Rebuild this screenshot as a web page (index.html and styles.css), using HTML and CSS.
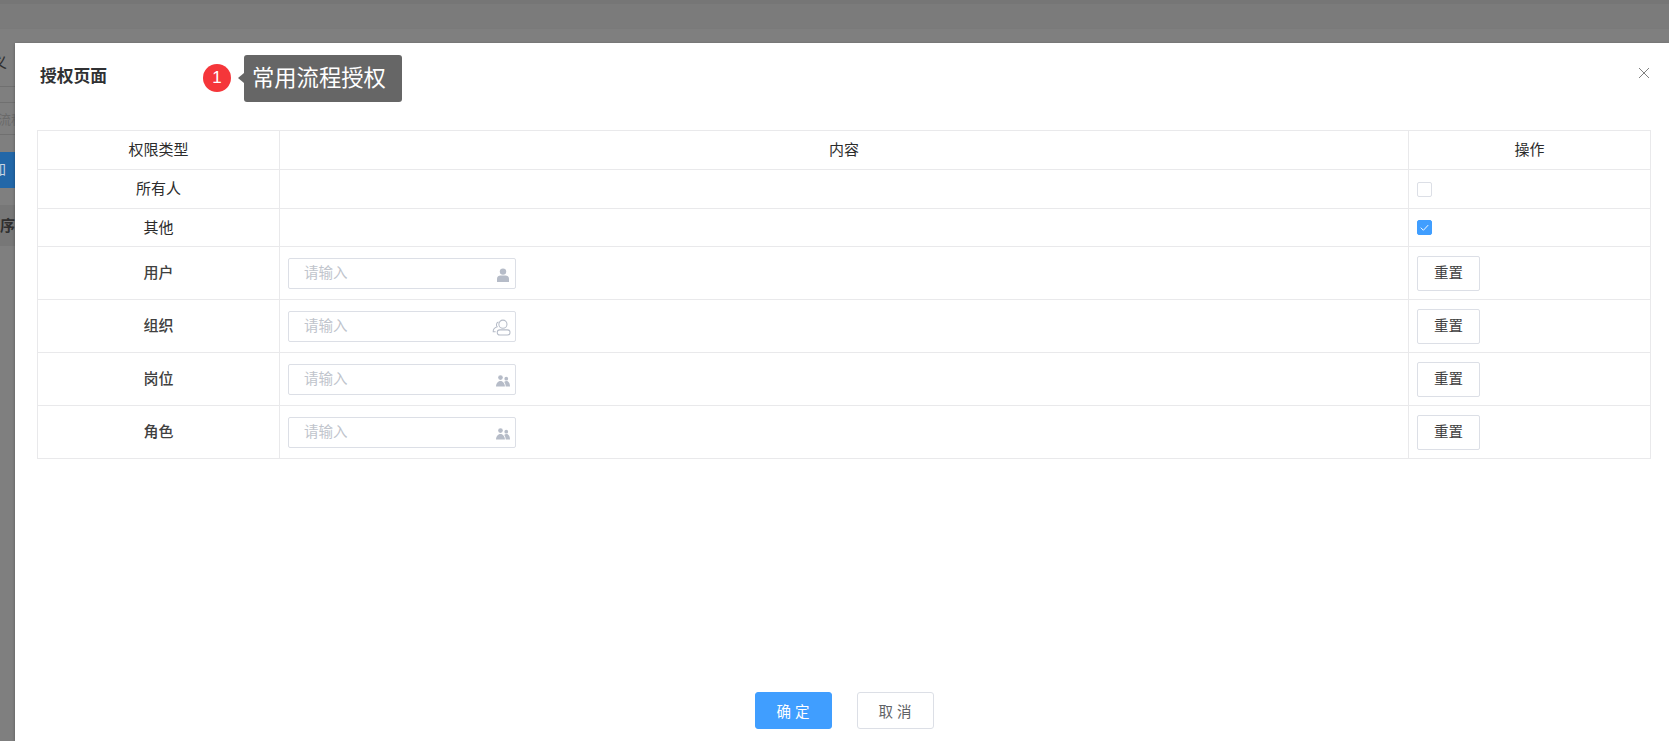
FILE: index.html
```html
<!DOCTYPE html>
<html>
<head>
  <title>授权页面</title>
  <link rel="stylesheet" href="styles.css">
</head>
<body>
  <div class="backdrop">
    <div class="bg-strip"></div>
    <div class="bg-title">义</div>
    <div class="bg-search">流程</div>
    <div class="bg-button">加</div>
    <div class="bg-head">序</div>
  </div>

  <div class="modal">
    <div class="modal-header">
      <span class="modal-title">授权页面</span>
      <span class="badge">1</span>
      <span class="callout">常用流程授权</span>
      <svg class="close-icon" viewBox="0 0 12 12"><path d="M1 1l10 10M11 1L1 11"/></svg>
    </div>

    <table class="auth-table">
      <colgroup>
        <col class="col-type">
        <col class="col-content">
        <col class="col-action">
      </colgroup>
      <tr class="row-small">
        <th>权限类型</th>
        <th>内容</th>
        <th>操作</th>
      </tr>
      <tr class="row-small">
        <td class="type">所有人</td>
        <td></td>
        <td class="action"><span class="checkbox"></span></td>
      </tr>
      <tr class="row-small row-last">
        <td class="type">其他</td>
        <td></td>
        <td class="action">
          <span class="checkbox checked">
            <svg viewBox="0 0 14 14"><path d="M3 7.200l2.800 2.800 5.200-5.600"/></svg>
          </span>
        </td>
      </tr>
      <tr>
        <td class="type type-strong">用户</td>
        <td class="field-cell">
          <div class="field">
            <span class="placeholder">请输入</span>
            <svg class="field-icon" viewBox="0 0 14 14"><circle cx="7" cy="3.600" r="3.200"/><path d="M1 14v-3.400C1 8.400 2.800 7.400 4.400 7.400h5.200c1.600 0 3.400 1 3.400 3.200V14z"/></svg>
          </div>
        </td>
        <td class="action"><button class="btn-reset">重置</button></td>
      </tr>
      <tr>
        <td class="type type-strong">组织</td>
        <td class="field-cell">
          <div class="field">
            <span class="placeholder">请输入</span>
            <svg class="field-icon icon-line" viewBox="0 0 20 18"><circle cx="11.500" cy="5.500" r="4.300"/><rect x="5.500" y="11.500" width="13.500" height="5.500" rx="2.700"/><path d="M6.800 3.200C4.600 3.800 4 6.600 5.400 8.200 3 9 1 10.600 1.200 13.600h2.600"/></svg>
          </div>
        </td>
        <td class="action"><button class="btn-reset">重置</button></td>
      </tr>
      <tr>
        <td class="type type-strong">岗位</td>
        <td class="field-cell">
          <div class="field">
            <span class="placeholder">请输入</span>
            <svg class="field-icon" viewBox="0 0 15 13"><circle cx="4.800" cy="2.800" r="2.500"/><circle cx="11" cy="4" r="2"/><path d="M0 12.500c0-3.200 2-6 4.800-6s4.600 2.800 4.800 6z"/><path d="M10.400 12.500c0-2-.6-4-1.700-5 .7-.6 1.500-.9 2.500-.9 2.500 0 3.800 2.800 3.800 5.900z"/></svg>
          </div>
        </td>
        <td class="action"><button class="btn-reset">重置</button></td>
      </tr>
      <tr>
        <td class="type type-strong">角色</td>
        <td class="field-cell">
          <div class="field">
            <span class="placeholder">请输入</span>
            <svg class="field-icon" viewBox="0 0 15 13"><circle cx="4.800" cy="2.800" r="2.500"/><circle cx="11" cy="4" r="2"/><path d="M0 12.500c0-3.200 2-6 4.800-6s4.600 2.800 4.800 6z"/><path d="M10.400 12.500c0-2-.6-4-1.700-5 .7-.6 1.500-.9 2.500-.9 2.500 0 3.800 2.800 3.800 5.900z"/></svg>
          </div>
        </td>
        <td class="action"><button class="btn-reset">重置</button></td>
      </tr>
    </table>

    <div class="modal-footer">
      <button class="btn btn-primary">确 定</button>
      <button class="btn">取 消</button>
    </div>
  </div>
</body>
</html>
```

FILE: styles.css
```css
* {
  box-sizing: border-box;
}

html, body {
  height: 100%;
}

body {
  margin: 0;
  overflow: hidden;
  background-color: #7f7f7f;
  font-family: "Liberation Sans", "Noto Sans CJK SC", sans-serif;
  color: #303133;
}

/* page behind the dialog, dimmed */
.backdrop {
  display: flex;
  flex-direction: column;
  height: 100%;
  color: #2f2f2f;
  font-size: 15px;
}
.bg-strip {
  height: 28px;
  border-top: 4px solid #767676;
  background-color: #7b7b7b;
}
.bg-title {
  height: 59px;
  padding-top: 22px;
  border-top: 1px solid #7a7a7a;
  border-bottom: 1px solid #707070;
  text-indent: -8px;
}
.bg-search {
  height: 33px;
  margin-top: 15px;
  padding-top: 6px;
  border-top: 1px solid #707070;
  border-bottom: 1px solid #707070;
  color: #6a6a6a;
  font-size: 13px;
  text-indent: -2px;
}
.bg-button {
  width: 15px;
  height: 36px;
  margin-top: 17px;
  padding-top: 6px;
  background-color: #2267a8;
  color: #c8d4e2;
  font-size: 14px;
  text-indent: -8px;
}
.bg-head {
  height: 41px;
  margin-top: 17px;
  padding-top: 9px;
  background-color: #777;
  font-weight: bold;
  overflow: hidden;
}

.modal {
  position: absolute;
  top: 43px;
  left: 15px;
  right: 0;
  bottom: 0;
  background-color: #fff;
  box-shadow: 0 1px 3px rgba(0, 0, 0, 0.3);
}

.modal-header {
  position: relative;
  height: 87px;
}
.modal-title {
  position: absolute;
  top: 23px;
  left: 25px;
  font-size: 16.8px;
  font-weight: bold;
  line-height: 22px;
}
.badge {
  position: absolute;
  top: 21px;
  left: 188px;
  width: 28px;
  height: 28px;
  border-radius: 50%;
  background-color: #f5363a;
  color: #fff;
  font-size: 17px;
  line-height: 28px;
  text-align: center;
}
.callout {
  position: absolute;
  top: 12px;
  left: 229px;
  width: 158px;
  height: 47px;
  padding-left: 8px;
  border-radius: 3px;
  background-color: #666;
  color: #fff;
  font-size: 22.3px;
  line-height: 47px;
}
.callout:before {
  content: "";
  position: absolute;
  top: 18px;
  left: -6px;
  border-top: 5px solid transparent;
  border-bottom: 5px solid transparent;
  border-right: 6px solid #666;
}
.close-icon {
  position: absolute;
  top: 24px;
  right: 19px;
  width: 12px;
  height: 12px;
  fill: none;
  stroke: #808080;
  stroke-width: 1;
}

.auth-table {
  width: 1613px;
  margin-left: 22px;
  border-collapse: collapse;
  table-layout: fixed;
  font-size: 15px;
}
.auth-table th, .auth-table td {
  height: 53px;
  padding: 0 0 3px;
  border: 1px solid #e9e9eb;
  text-align: center;
}
.auth-table th {
  font-weight: normal;
  color: #2c2c2c;
}
.auth-table .row-small th, .auth-table .row-small td {
  height: 39px;
}
.auth-table .row-last td {
  height: 38px;
}
.auth-table .type {
  color: #2c2c2c;
}
.auth-table .type-strong {
  font-weight: 500;
  color: #404040;
}
.col-type {
  width: 242px;
}
.col-content {
  width: 1129px;
}
.col-action {
  width: 242px;
}
.auth-table .action, .auth-table .field-cell {
  padding: 0 0 0 8px;
  text-align: left;
}

.checkbox {
  display: block;
  width: 15px;
  height: 15px;
  border: 1px solid #dcdfe6;
  border-radius: 2px;
  background-color: #fff;
}
.checkbox.checked {
  border-color: #409eff;
  background-color: #409eff;
}
.checkbox svg {
  display: block;
  width: 13px;
  height: 13px;
  fill: none;
  stroke: #fff;
  stroke-width: 1;
}

.field {
  display: flex;
  align-items: center;
  justify-content: space-between;
  width: 228px;
  height: 31px;
  padding: 0 5px 0 15px;
  border: 1px solid #dcdfe6;
  border-radius: 2px;
}
.placeholder {
  margin-top: -3px;
  color: #c0c4cc;
  font-size: 14.5px;
}
.field-icon {
  width: 14px;
  height: 14px;
  margin-top: 3px;
  fill: #b6bcc8;
}
.icon-line {
  width: 19px;
  height: 17px;
  margin-right: -1px;
  fill: none;
  stroke: #b6bcc8;
  stroke-width: 1.1;
}

.btn-reset {
  display: block;
  width: 63px;
  height: 35px;
  padding: 0 0 3px;
  border: 1px solid #dcdfe6;
  border-radius: 2px;
  background-color: #fff;
  color: #404040;
  font-family: inherit;
  font-size: 14.5px;
}

.modal-footer {
  position: absolute;
  bottom: 12px;
  left: 0;
  right: 0;
  display: flex;
  justify-content: center;
  gap: 25px;
  padding-left: 4px;
}
.btn {
  width: 77px;
  height: 37px;
  padding: 0;
  border: 1px solid #dcdfe6;
  border-radius: 3px;
  background-color: #fff;
  color: #606266;
  font-family: inherit;
  font-size: 14.5px;
}
.btn-primary {
  border-color: #409eff;
  background-color: #409eff;
  color: #fff;
}
```
